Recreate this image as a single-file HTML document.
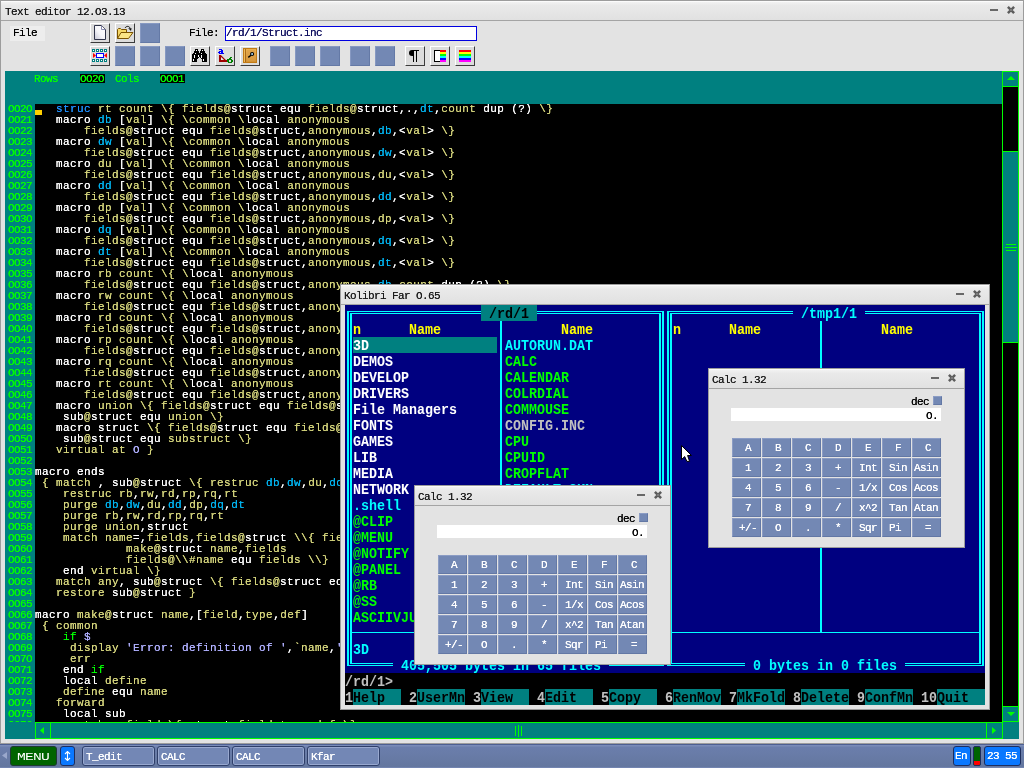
<!DOCTYPE html>
<html><head><meta charset="utf-8"><title>KolibriOS</title>
<style>
html,body{margin:0;padding:0}
body{width:1024px;height:768px;overflow:hidden;position:relative;background:#6679a7;font-family:"Liberation Mono",monospace}
div,span,svg{position:absolute;box-sizing:border-box}
span.i{position:static}
.win{background:#e3e3e3;border:1px solid #9c9c9c}
.tb{left:0;top:0;right:0;height:20px;background:linear-gradient(#f2f2f2,#e9e9e9 20%,#e1e1e1);border-bottom:1px solid #a4a4a4;border-top:1px solid #fbfbfb}
.s{font:11px/11px "Liberation Mono",monospace;letter-spacing:-0.6px;white-space:pre;color:#000;text-shadow:0 0 0 currentColor}
.tt{left:4px;top:6px;color:#1c1c1c}
.mn{width:8px;height:2px;background:#686868;top:8px}
.cl{width:8px;height:8px;top:5px}
.code{font:11px/11px "Liberation Mono",monospace;letter-spacing:0.4px;white-space:pre;text-shadow:0 0 0 currentColor}
.code span{position:static}
.ib{width:20px;height:20px;background:#dcdcdc;border:1px solid;border-color:#fff #3c3c3c #3c3c3c #fff}
.bb{width:20px;height:20px;background:#7388b4;border:1px solid;border-color:#8799c2 #6479a6 #6479a6 #8799c2}
.cb{width:29px;height:19px;background:#7388b4;border:1px solid;border-color:#8b9cc4 #6378a5 #6378a5 #8b9cc4;color:#fff;text-align:center}
.cb .s{top:4px;color:#fff}
.tk{top:2px;height:20px;width:73px;background:#7387b5;border:1px solid #2f3f6a;border-radius:3px;box-shadow:inset 0 0 0 1px #98a8cf}
.tk .s{left:3px;top:5px;color:#fff}
.f{font:bold 13.333px/14px "Liberation Mono",monospace;white-space:pre;height:14px}
.cy{background:#00ffff}
</style></head><body>
<div id="root" style="left:0;top:0;width:1024px;height:768px;will-change:transform">

<div class="win" style="left:0;top:0;width:1024px;height:744px">
<div class="tb"></div><div class="s tt">Text editor 12.O3.13</div>
<div class="mn" style="left:989px"></div>
<svg class="cl" style="left:1006px" viewBox="0 0 8 8"><path d="M0.9 0.9L7.1 7.1M7.1 0.9L0.9 7.1" stroke="#5c5c5c" stroke-width="2.5" stroke-linecap="butt"/><rect x="3" y="3" width="2" height="2" fill="#7c7c7c"/></svg>
<div style="left:9px;top:25px;width:35px;height:15px;background:#ededed"></div><div class="s" style="left:12px;top:27px">File</div>
<div class="ib" style="left:89px;top:22px"><svg style="left:3px;top:1px" width="13" height="16" viewBox="0 0 13 16"><defs><linearGradient id="pg" x1="1" y1="0" x2="0" y2="1"><stop offset="0" stop-color="#fff"/><stop offset="0.55" stop-color="#f6f6fa"/><stop offset="1" stop-color="#c4c4d4"/></linearGradient></defs><path d="M0.5 0.5H7.5L11.5 4.5V14.5H0.5Z" fill="url(#pg)" stroke="#30344a" stroke-width="1"/><path d="M7.5 0.8V4.5H11.2" fill="#fff" stroke="#8a8cb0" stroke-width="1"/></svg></div>
<div class="ib" style="left:114px;top:22px"><svg style="left:0px;top:1px" width="18" height="16" viewBox="0 0 18 16"><path d="M1.5 13.5V4.5L2.5 3.5H4.5L5.5 4.5H10.5V8" fill="#f6d868" stroke="#7a5200" stroke-width="1"/><path d="M1.5 13.5L5 7.5H17L12.5 13.5Z" fill="#fbe486" stroke="#7a5200" stroke-width="1"/><path d="M9 3C10.5 0.8 13 0.8 14.2 3.2" fill="none" stroke="#111" stroke-width="1"/><path d="M12.2 3.2H15.6L15 6Z" fill="#111"/></svg></div>
<div class="bb" style="left:139px;top:22px"></div>
<div class="ib" style="left:89px;top:45px"><svg style="left:0;top:0" width="18" height="18" viewBox="0 0 18 18" shape-rendering="crispEdges"><rect x="1" y="2" width="3" height="3" fill="#008080"/><rect x="2" y="3" width="1" height="1" fill="#fff"/><rect x="5" y="2" width="3" height="3" fill="#008080"/><rect x="6" y="3" width="1" height="1" fill="#fff"/><rect x="9" y="2" width="3" height="3" fill="#008080"/><rect x="10" y="3" width="1" height="1" fill="#fff"/><rect x="13" y="2" width="3" height="3" fill="#008080"/><rect x="14" y="3" width="1" height="1" fill="#fff"/><rect x="1" y="12" width="3" height="3" fill="#008080"/><rect x="2" y="13" width="1" height="1" fill="#fff"/><rect x="5" y="12" width="3" height="3" fill="#008080"/><rect x="6" y="13" width="1" height="1" fill="#fff"/><rect x="9" y="12" width="3" height="3" fill="#008080"/><rect x="10" y="13" width="1" height="1" fill="#fff"/><rect x="13" y="12" width="3" height="3" fill="#008080"/><rect x="14" y="13" width="1" height="1" fill="#fff"/><rect x="5" y="6" width="8" height="5" fill="#0000ff"/><rect x="6" y="7" width="6" height="3" fill="#fff"/><path d="M2 6V11L5 8.5Z" fill="#ff0000" shape-rendering="auto"/><path d="M16 6V11L13 8.5Z" fill="#ff0000" shape-rendering="auto"/></svg></div>
<div class="bb" style="left:114px;top:45px"></div>
<div class="bb" style="left:139px;top:45px"></div>
<div class="bb" style="left:164px;top:45px"></div>
<div class="ib" style="left:189px;top:45px"><svg style="left:1px;top:2px" width="16" height="14" viewBox="0 0 16 14" shape-rendering="crispEdges"><rect x="3" y="0" width="3" height="2" fill="#000"/><rect x="9" y="0" width="3" height="2" fill="#000"/><rect x="2" y="2" width="5" height="2" fill="#000"/><rect x="8" y="2" width="5" height="2" fill="#000"/><rect x="1" y="4" width="13" height="1" fill="#000"/><rect x="0" y="5" width="15" height="3" fill="#000"/><rect x="0" y="8" width="7" height="1" fill="#000"/><rect x="8" y="8" width="7" height="1" fill="#000"/><rect x="0" y="9" width="6" height="1" fill="#000"/><rect x="9" y="9" width="6" height="1" fill="#000"/><rect x="0" y="10" width="5" height="3" fill="#000"/><rect x="10" y="10" width="5" height="3" fill="#000"/><rect x="4" y="1" width="1" height="1" fill="#fff"/><rect x="10" y="1" width="1" height="1" fill="#fff"/><rect x="3" y="4" width="1" height="1" fill="#fff"/><rect x="9" y="4" width="1" height="1" fill="#fff"/><rect x="2" y="6" width="1" height="3" fill="#fff"/><rect x="6" y="6" width="1" height="2" fill="#fff"/><rect x="9" y="6" width="1" height="3" fill="#fff"/><rect x="1" y="10" width="1" height="2" fill="#fff"/><rect x="11" y="10" width="1" height="2" fill="#fff"/></svg></div>
<div class="ib" style="left:214px;top:45px"><svg style="left:0;top:0" width="18" height="18" viewBox="0 0 18 18"><g shape-rendering="crispEdges"><rect x="3" y="2" width="3" height="1" fill="#0000ff"/><rect x="5" y="3" width="2" height="1" fill="#0000ff"/><rect x="3" y="4" width="4" height="1" fill="#0000ff"/><rect x="2" y="5" width="2" height="1" fill="#0000ff"/><rect x="5" y="5" width="2" height="1" fill="#0000ff"/><rect x="3" y="6" width="4" height="1" fill="#0000ff"/><rect x="7" y="6" width="1" height="1" fill="#0000ff"/><rect x="3" y="8" width="2" height="7" fill="#a00000"/><rect x="3" y="13" width="8" height="2" fill="#a00000"/><rect x="5" y="11" width="2" height="2" fill="#e4f0f0"/></g><path d="M4.5 8.5L10.5 14.5" stroke="#a00000" stroke-width="1.1"/><g shape-rendering="crispEdges"><rect x="14" y="10" width="2" height="1" fill="#008000"/><rect x="13" y="11" width="2" height="1" fill="#008000"/><rect x="12" y="12" width="4" height="1" fill="#008000"/><rect x="11" y="13" width="2" height="2" fill="#008000"/><rect x="15" y="13" width="2" height="2" fill="#008000"/><rect x="12" y="15" width="4" height="1" fill="#008000"/><rect x="11" y="12" width="1" height="1" fill="#008000"/></g></svg></div>
<div class="ib" style="left:239px;top:45px"><svg style="left:2px;top:1px" width="14" height="15" viewBox="0 0 14 15"><defs><linearGradient id="bk" x1="0" y1="0" x2="0" y2="1"><stop offset="0" stop-color="#eeb450"/><stop offset="0.5" stop-color="#dda044"/><stop offset="1" stop-color="#d09030"/></linearGradient></defs><rect x="0.5" y="0.5" width="13" height="14" fill="url(#bk)" stroke="#c27a14"/><rect x="1" y="1" width="1.2" height="13" fill="#f0bc5c"/><rect x="2.2" y="1" width="0.8" height="13" fill="#9a5a10"/><rect x="4" y="2" width="8" height="11" fill="#d89c48" opacity="0.6"/><circle cx="9.1" cy="6" r="1.5" fill="#b8e4ff" stroke="#000" stroke-width="1.1"/><path d="M8 7.2L5.3 9.4" stroke="#000" stroke-width="1.4"/></svg></div>
<div class="bb" style="left:269px;top:45px"></div>
<div class="bb" style="left:294px;top:45px"></div>
<div class="bb" style="left:319px;top:45px"></div>
<div class="bb" style="left:349px;top:45px"></div>
<div class="bb" style="left:374px;top:45px"></div>
<div class="ib" style="left:404px;top:45px"><svg style="left:3px;top:3px" width="12" height="13" viewBox="0 0 12 13"><path d="M10 0H3A3 3 0 0 0 3 6H4V12H5V1H7V12H8V1H10Z" fill="#000"/></svg></div>
<div class="ib" style="left:429px;top:45px"><svg style="left:3px;top:3px" width="13" height="12" viewBox="0 0 13 12" shape-rendering="crispEdges"><rect x="0" y="0" width="6" height="12" fill="#000"/><rect x="1" y="1" width="5" height="10" fill="#fff"/><rect x="6" y="0" width="6" height="2" fill="#ff0000"/><rect x="6" y="2" width="6" height="2" fill="#ffff00"/><rect x="6" y="4" width="6" height="2" fill="#00ff00"/><rect x="6" y="6" width="6" height="2" fill="#00ffff"/><rect x="6" y="8" width="6" height="2" fill="#0000ff"/><rect x="6" y="10" width="6" height="2" fill="#ff00ff"/></svg></div>
<div class="ib" style="left:454px;top:45px"><svg style="left:3px;top:3px" width="13" height="12" viewBox="0 0 13 12" shape-rendering="crispEdges"><rect x="0" y="0" width="12" height="2" fill="#ff0000"/><rect x="0" y="2" width="12" height="2" fill="#ffff00"/><rect x="0" y="4" width="12" height="2" fill="#00ff00"/><rect x="0" y="6" width="12" height="2" fill="#00ffff"/><rect x="0" y="8" width="12" height="2" fill="#0000ff"/><rect x="0" y="10" width="12" height="2" fill="#ff00ff"/></svg></div>
<div class="s" style="left:188px;top:27px">File:</div>
<div style="left:224px;top:25px;width:252px;height:15px;background:#fff;border:1px solid #0000e0"></div>
<div class="s" style="left:225px;top:27px;color:#101060">/rd/1/Struct.inc</div>
<div style="left:4px;top:70px;width:1014px;height:668px;background:#008080"></div>
<div style="left:34px;top:103px;width:967px;height:618px;background:#000;overflow:hidden">
<div style="left:0;top:6px;width:7px;height:5px;background:#ffd000"></div>
<div class="code" style="left:0;top:0">
<div style="left:0;top:0px;height:11px"><span style="color:#d4d47c">   </span><span style="color:#1e90ff">struc </span><span style="color:#d4d47c">rt count \{ fields@</span><span style="color:#ffffff">struct equ </span><span style="color:#d4d47c">fields@</span><span style="color:#ffffff">struct,.,</span><span style="color:#00b4f0">dt</span><span style="color:#ffffff">,</span><span style="color:#d4d47c">count </span><span style="color:#ffffff">dup (?) </span><span style="color:#d4d47c">\}</span></div>
<div style="left:0;top:11px;height:11px"><span style="color:#d4d47c">   </span><span style="color:#ffffff">macro </span><span style="color:#00b4f0">db </span><span style="color:#ffffff">[</span><span style="color:#d4d47c">val</span><span style="color:#ffffff">] </span><span style="color:#d4d47c">\{ \common \</span><span style="color:#ffffff">local </span><span style="color:#d4d47c">anonymous</span></div>
<div style="left:0;top:22px;height:11px"><span style="color:#d4d47c">       fields@</span><span style="color:#ffffff">struct equ </span><span style="color:#d4d47c">fields@</span><span style="color:#ffffff">struct,</span><span style="color:#d4d47c">anonymous</span><span style="color:#ffffff">,</span><span style="color:#00b4f0">db</span><span style="color:#ffffff">,&lt;</span><span style="color:#d4d47c">val</span><span style="color:#ffffff">&gt; </span><span style="color:#d4d47c">\}</span></div>
<div style="left:0;top:33px;height:11px"><span style="color:#d4d47c">   </span><span style="color:#ffffff">macro </span><span style="color:#00b4f0">dw </span><span style="color:#ffffff">[</span><span style="color:#d4d47c">val</span><span style="color:#ffffff">] </span><span style="color:#d4d47c">\{ \common \</span><span style="color:#ffffff">local </span><span style="color:#d4d47c">anonymous</span></div>
<div style="left:0;top:44px;height:11px"><span style="color:#d4d47c">       fields@</span><span style="color:#ffffff">struct equ </span><span style="color:#d4d47c">fields@</span><span style="color:#ffffff">struct,</span><span style="color:#d4d47c">anonymous</span><span style="color:#ffffff">,</span><span style="color:#00b4f0">dw</span><span style="color:#ffffff">,&lt;</span><span style="color:#d4d47c">val</span><span style="color:#ffffff">&gt; </span><span style="color:#d4d47c">\}</span></div>
<div style="left:0;top:55px;height:11px"><span style="color:#d4d47c">   </span><span style="color:#ffffff">macro </span><span style="color:#d4d47c">du </span><span style="color:#ffffff">[</span><span style="color:#d4d47c">val</span><span style="color:#ffffff">] </span><span style="color:#d4d47c">\{ \common \</span><span style="color:#ffffff">local </span><span style="color:#d4d47c">anonymous</span></div>
<div style="left:0;top:66px;height:11px"><span style="color:#d4d47c">       fields@</span><span style="color:#ffffff">struct equ </span><span style="color:#d4d47c">fields@</span><span style="color:#ffffff">struct,</span><span style="color:#d4d47c">anonymous</span><span style="color:#ffffff">,</span><span style="color:#d4d47c">du</span><span style="color:#ffffff">,&lt;</span><span style="color:#d4d47c">val</span><span style="color:#ffffff">&gt; </span><span style="color:#d4d47c">\}</span></div>
<div style="left:0;top:77px;height:11px"><span style="color:#d4d47c">   </span><span style="color:#ffffff">macro </span><span style="color:#00b4f0">dd </span><span style="color:#ffffff">[</span><span style="color:#d4d47c">val</span><span style="color:#ffffff">] </span><span style="color:#d4d47c">\{ \common \</span><span style="color:#ffffff">local </span><span style="color:#d4d47c">anonymous</span></div>
<div style="left:0;top:88px;height:11px"><span style="color:#d4d47c">       fields@</span><span style="color:#ffffff">struct equ </span><span style="color:#d4d47c">fields@</span><span style="color:#ffffff">struct,</span><span style="color:#d4d47c">anonymous</span><span style="color:#ffffff">,</span><span style="color:#00b4f0">dd</span><span style="color:#ffffff">,&lt;</span><span style="color:#d4d47c">val</span><span style="color:#ffffff">&gt; </span><span style="color:#d4d47c">\}</span></div>
<div style="left:0;top:99px;height:11px"><span style="color:#d4d47c">   </span><span style="color:#ffffff">macro </span><span style="color:#d4d47c">dp </span><span style="color:#ffffff">[</span><span style="color:#d4d47c">val</span><span style="color:#ffffff">] </span><span style="color:#d4d47c">\{ \common \</span><span style="color:#ffffff">local </span><span style="color:#d4d47c">anonymous</span></div>
<div style="left:0;top:110px;height:11px"><span style="color:#d4d47c">       fields@</span><span style="color:#ffffff">struct equ </span><span style="color:#d4d47c">fields@</span><span style="color:#ffffff">struct,</span><span style="color:#d4d47c">anonymous</span><span style="color:#ffffff">,</span><span style="color:#d4d47c">dp</span><span style="color:#ffffff">,&lt;</span><span style="color:#d4d47c">val</span><span style="color:#ffffff">&gt; </span><span style="color:#d4d47c">\}</span></div>
<div style="left:0;top:121px;height:11px"><span style="color:#d4d47c">   </span><span style="color:#ffffff">macro </span><span style="color:#00b4f0">dq </span><span style="color:#ffffff">[</span><span style="color:#d4d47c">val</span><span style="color:#ffffff">] </span><span style="color:#d4d47c">\{ \common \</span><span style="color:#ffffff">local </span><span style="color:#d4d47c">anonymous</span></div>
<div style="left:0;top:132px;height:11px"><span style="color:#d4d47c">       fields@</span><span style="color:#ffffff">struct equ </span><span style="color:#d4d47c">fields@</span><span style="color:#ffffff">struct,</span><span style="color:#d4d47c">anonymous</span><span style="color:#ffffff">,</span><span style="color:#00b4f0">dq</span><span style="color:#ffffff">,&lt;</span><span style="color:#d4d47c">val</span><span style="color:#ffffff">&gt; </span><span style="color:#d4d47c">\}</span></div>
<div style="left:0;top:143px;height:11px"><span style="color:#d4d47c">   </span><span style="color:#ffffff">macro </span><span style="color:#00b4f0">dt </span><span style="color:#ffffff">[</span><span style="color:#d4d47c">val</span><span style="color:#ffffff">] </span><span style="color:#d4d47c">\{ \common \</span><span style="color:#ffffff">local </span><span style="color:#d4d47c">anonymous</span></div>
<div style="left:0;top:154px;height:11px"><span style="color:#d4d47c">       fields@</span><span style="color:#ffffff">struct equ </span><span style="color:#d4d47c">fields@</span><span style="color:#ffffff">struct,</span><span style="color:#d4d47c">anonymous</span><span style="color:#ffffff">,</span><span style="color:#00b4f0">dt</span><span style="color:#ffffff">,&lt;</span><span style="color:#d4d47c">val</span><span style="color:#ffffff">&gt; </span><span style="color:#d4d47c">\}</span></div>
<div style="left:0;top:165px;height:11px"><span style="color:#d4d47c">   </span><span style="color:#ffffff">macro </span><span style="color:#d4d47c">rb count \{ \</span><span style="color:#ffffff">local </span><span style="color:#d4d47c">anonymous</span></div>
<div style="left:0;top:176px;height:11px"><span style="color:#d4d47c">       fields@</span><span style="color:#ffffff">struct equ </span><span style="color:#d4d47c">fields@</span><span style="color:#ffffff">struct,</span><span style="color:#d4d47c">anonymous</span><span style="color:#ffffff">,</span><span style="color:#00b4f0">db</span><span style="color:#ffffff">,</span><span style="color:#d4d47c">count </span><span style="color:#ffffff">dup (?) </span><span style="color:#d4d47c">\}</span></div>
<div style="left:0;top:187px;height:11px"><span style="color:#d4d47c">   </span><span style="color:#ffffff">macro </span><span style="color:#d4d47c">rw count \{ \</span><span style="color:#ffffff">local </span><span style="color:#d4d47c">anonymous</span></div>
<div style="left:0;top:198px;height:11px"><span style="color:#d4d47c">       fields@</span><span style="color:#ffffff">struct equ </span><span style="color:#d4d47c">fields@</span><span style="color:#ffffff">struct,</span><span style="color:#d4d47c">anonymous</span><span style="color:#ffffff">,</span><span style="color:#00b4f0">dw</span><span style="color:#ffffff">,</span><span style="color:#d4d47c">count </span><span style="color:#ffffff">dup (?) </span><span style="color:#d4d47c">\}</span></div>
<div style="left:0;top:209px;height:11px"><span style="color:#d4d47c">   </span><span style="color:#ffffff">macro </span><span style="color:#d4d47c">rd count \{ \</span><span style="color:#ffffff">local </span><span style="color:#d4d47c">anonymous</span></div>
<div style="left:0;top:220px;height:11px"><span style="color:#d4d47c">       fields@</span><span style="color:#ffffff">struct equ </span><span style="color:#d4d47c">fields@</span><span style="color:#ffffff">struct,</span><span style="color:#d4d47c">anonymous</span><span style="color:#ffffff">,</span><span style="color:#00b4f0">dd</span><span style="color:#ffffff">,</span><span style="color:#d4d47c">count </span><span style="color:#ffffff">dup (?) </span><span style="color:#d4d47c">\}</span></div>
<div style="left:0;top:231px;height:11px"><span style="color:#d4d47c">   </span><span style="color:#ffffff">macro </span><span style="color:#d4d47c">rp count \{ \</span><span style="color:#ffffff">local </span><span style="color:#d4d47c">anonymous</span></div>
<div style="left:0;top:242px;height:11px"><span style="color:#d4d47c">       fields@</span><span style="color:#ffffff">struct equ </span><span style="color:#d4d47c">fields@</span><span style="color:#ffffff">struct,</span><span style="color:#d4d47c">anonymous</span><span style="color:#ffffff">,</span><span style="color:#d4d47c">dp</span><span style="color:#ffffff">,</span><span style="color:#d4d47c">count </span><span style="color:#ffffff">dup (?) </span><span style="color:#d4d47c">\}</span></div>
<div style="left:0;top:253px;height:11px"><span style="color:#d4d47c">   </span><span style="color:#ffffff">macro </span><span style="color:#d4d47c">rq count \{ \</span><span style="color:#ffffff">local </span><span style="color:#d4d47c">anonymous</span></div>
<div style="left:0;top:264px;height:11px"><span style="color:#d4d47c">       fields@</span><span style="color:#ffffff">struct equ </span><span style="color:#d4d47c">fields@</span><span style="color:#ffffff">struct,</span><span style="color:#d4d47c">anonymous</span><span style="color:#ffffff">,</span><span style="color:#00b4f0">dq</span><span style="color:#ffffff">,</span><span style="color:#d4d47c">count </span><span style="color:#ffffff">dup (?) </span><span style="color:#d4d47c">\}</span></div>
<div style="left:0;top:275px;height:11px"><span style="color:#d4d47c">   </span><span style="color:#ffffff">macro </span><span style="color:#d4d47c">rt count \{ \</span><span style="color:#ffffff">local </span><span style="color:#d4d47c">anonymous</span></div>
<div style="left:0;top:286px;height:11px"><span style="color:#d4d47c">       fields@</span><span style="color:#ffffff">struct equ </span><span style="color:#d4d47c">fields@</span><span style="color:#ffffff">struct,</span><span style="color:#d4d47c">anonymous</span><span style="color:#ffffff">,</span><span style="color:#00b4f0">dt</span><span style="color:#ffffff">,</span><span style="color:#d4d47c">count </span><span style="color:#ffffff">dup (?) </span><span style="color:#d4d47c">\}</span></div>
<div style="left:0;top:297px;height:11px"><span style="color:#d4d47c">   </span><span style="color:#ffffff">macro </span><span style="color:#d4d47c">union \{ fields@</span><span style="color:#ffffff">struct equ </span><span style="color:#d4d47c">fields@</span><span style="color:#ffffff">struct,,</span><span style="color:#d4d47c">union</span><span style="color:#ffffff">,&lt;</span></div>
<div style="left:0;top:308px;height:11px"><span style="color:#d4d47c">    </span><span style="color:#ffffff">sub</span><span style="color:#d4d47c">@</span><span style="color:#ffffff">struct equ </span><span style="color:#d4d47c">union \}</span></div>
<div style="left:0;top:319px;height:11px"><span style="color:#d4d47c">   </span><span style="color:#ffffff">macro struct </span><span style="color:#d4d47c">\{ fields@</span><span style="color:#ffffff">struct equ </span><span style="color:#d4d47c">fields@</span><span style="color:#ffffff">struct,,</span><span style="color:#d4d47c">substruct</span><span style="color:#ffffff">,&lt;</span></div>
<div style="left:0;top:330px;height:11px"><span style="color:#d4d47c">    </span><span style="color:#ffffff">sub</span><span style="color:#d4d47c">@</span><span style="color:#ffffff">struct equ </span><span style="color:#d4d47c">substruct \}</span></div>
<div style="left:0;top:341px;height:11px"><span style="color:#d4d47c">   virtual at </span><span style="color:#b0b0ff">O </span><span style="color:#d4d47c">}</span></div>
<div style="left:0;top:352px;height:11px"></div>
<div style="left:0;top:363px;height:11px"><span style="color:#ffffff">macro ends</span></div>
<div style="left:0;top:374px;height:11px"><span style="color:#d4d47c"> { match </span><span style="color:#ffffff">, sub</span><span style="color:#d4d47c">@</span><span style="color:#ffffff">struct </span><span style="color:#d4d47c">\{ restruc </span><span style="color:#00b4f0">db</span><span style="color:#ffffff">,</span><span style="color:#00b4f0">dw</span><span style="color:#ffffff">,</span><span style="color:#d4d47c">du</span><span style="color:#ffffff">,</span><span style="color:#00b4f0">dd</span><span style="color:#ffffff">,</span><span style="color:#d4d47c">dp</span><span style="color:#ffffff">,</span><span style="color:#00b4f0">dq</span><span style="color:#ffffff">,</span><span style="color:#00b4f0">dt</span></div>
<div style="left:0;top:385px;height:11px"><span style="color:#d4d47c">    restruc rb</span><span style="color:#ffffff">,</span><span style="color:#d4d47c">rw</span><span style="color:#ffffff">,</span><span style="color:#d4d47c">rd</span><span style="color:#ffffff">,</span><span style="color:#d4d47c">rp</span><span style="color:#ffffff">,</span><span style="color:#d4d47c">rq</span><span style="color:#ffffff">,</span><span style="color:#d4d47c">rt</span></div>
<div style="left:0;top:396px;height:11px"><span style="color:#d4d47c">    purge </span><span style="color:#00b4f0">db</span><span style="color:#ffffff">,</span><span style="color:#00b4f0">dw</span><span style="color:#ffffff">,</span><span style="color:#d4d47c">du</span><span style="color:#ffffff">,</span><span style="color:#00b4f0">dd</span><span style="color:#ffffff">,</span><span style="color:#d4d47c">dp</span><span style="color:#ffffff">,</span><span style="color:#00b4f0">dq</span><span style="color:#ffffff">,</span><span style="color:#00b4f0">dt</span></div>
<div style="left:0;top:407px;height:11px"><span style="color:#d4d47c">    purge rb</span><span style="color:#ffffff">,</span><span style="color:#d4d47c">rw</span><span style="color:#ffffff">,</span><span style="color:#d4d47c">rd</span><span style="color:#ffffff">,</span><span style="color:#d4d47c">rp</span><span style="color:#ffffff">,</span><span style="color:#d4d47c">rq</span><span style="color:#ffffff">,</span><span style="color:#d4d47c">rt</span></div>
<div style="left:0;top:418px;height:11px"><span style="color:#d4d47c">    purge union</span><span style="color:#ffffff">,struct</span></div>
<div style="left:0;top:429px;height:11px"><span style="color:#d4d47c">    match name</span><span style="color:#ffffff">=,</span><span style="color:#d4d47c">fields</span><span style="color:#ffffff">,</span><span style="color:#d4d47c">fields@</span><span style="color:#ffffff">struct </span><span style="color:#d4d47c">\\{ fields@</span><span style="color:#ffffff">struct equ</span></div>
<div style="left:0;top:440px;height:11px"><span style="color:#d4d47c">             make@</span><span style="color:#ffffff">struct </span><span style="color:#d4d47c">name</span><span style="color:#ffffff">,</span><span style="color:#d4d47c">fields</span></div>
<div style="left:0;top:451px;height:11px"><span style="color:#d4d47c">             fields@\\#name </span><span style="color:#ffffff">equ </span><span style="color:#d4d47c">fields \\}</span></div>
<div style="left:0;top:462px;height:11px"><span style="color:#d4d47c">    </span><span style="color:#ffffff">end </span><span style="color:#d4d47c">virtual \}</span></div>
<div style="left:0;top:473px;height:11px"><span style="color:#d4d47c">   match any</span><span style="color:#ffffff">, sub</span><span style="color:#d4d47c">@</span><span style="color:#ffffff">struct </span><span style="color:#d4d47c">\{ fields@</span><span style="color:#ffffff">struct equ </span><span style="color:#d4d47c">fields@</span><span style="color:#ffffff">struct,.,sub</span><span style="color:#d4d47c">@</span><span style="color:#ffffff">struct,&lt;</span><span style="color:#d4d47c">fields</span><span style="color:#ffffff">&gt; </span><span style="color:#d4d47c">\}</span></div>
<div style="left:0;top:484px;height:11px"><span style="color:#d4d47c">   restore </span><span style="color:#ffffff">sub</span><span style="color:#d4d47c">@</span><span style="color:#ffffff">struct </span><span style="color:#d4d47c">}</span></div>
<div style="left:0;top:495px;height:11px"></div>
<div style="left:0;top:506px;height:11px"><span style="color:#ffffff">macro </span><span style="color:#d4d47c">make@</span><span style="color:#ffffff">struct </span><span style="color:#d4d47c">name</span><span style="color:#ffffff">,[</span><span style="color:#d4d47c">field</span><span style="color:#ffffff">,</span><span style="color:#d4d47c">type</span><span style="color:#ffffff">,</span><span style="color:#d4d47c">def</span><span style="color:#ffffff">]</span></div>
<div style="left:0;top:517px;height:11px"><span style="color:#d4d47c"> { common</span></div>
<div style="left:0;top:528px;height:11px"><span style="color:#d4d47c">    </span><span style="color:#00ff00">if </span><span style="color:#b0b0ff">$</span></div>
<div style="left:0;top:539px;height:11px"><span style="color:#d4d47c">     display </span><span style="color:#b0b0ff">&#x27;Error: definition of &#x27;</span><span style="color:#ffffff">,</span><span style="color:#d4d47c">`name</span><span style="color:#ffffff">,</span><span style="color:#b0b0ff">&#x27; contains illegal instructions.&#x27;</span><span style="color:#ffffff">,</span><span style="color:#b0b0ff">ODh</span><span style="color:#ffffff">,</span><span style="color:#b0b0ff">OAh</span></div>
<div style="left:0;top:550px;height:11px"><span style="color:#d4d47c">     err</span></div>
<div style="left:0;top:561px;height:11px"><span style="color:#d4d47c">    </span><span style="color:#ffffff">end </span><span style="color:#00ff00">if</span></div>
<div style="left:0;top:572px;height:11px"><span style="color:#d4d47c">    </span><span style="color:#ffffff">local </span><span style="color:#d4d47c">define</span></div>
<div style="left:0;top:583px;height:11px"><span style="color:#d4d47c">    define </span><span style="color:#ffffff">equ </span><span style="color:#d4d47c">name</span></div>
<div style="left:0;top:594px;height:11px"><span style="color:#d4d47c">   forward</span></div>
<div style="left:0;top:605px;height:11px"><span style="color:#d4d47c">    </span><span style="color:#ffffff">local sub</span></div>
<div style="left:0;top:616px;height:11px"><span style="color:#d4d47c">     match </span><span style="color:#ffffff">, </span><span style="color:#d4d47c">field \{ </span><span style="color:#ffffff">struct </span><span style="color:#d4d47c">field type def \}</span></div>
</div></div>
<div class="s" style="left:33px;top:73px;color:#00ff00">Rows</div>
<div style="left:79px;top:73px;width:25px;height:9px;background:#000"></div><div class="s" style="left:79px;top:73px;color:#00ff00">OO2O</div>
<div class="s" style="left:114px;top:73px;color:#00ff00">Cols</div>
<div style="left:159px;top:73px;width:25px;height:9px;background:#000"></div><div class="s" style="left:159px;top:73px;color:#00ff00">OOO1</div>
<div style="left:4px;top:103px;width:30px;height:618px;overflow:hidden">
<div class="s" style="left:3px;top:0px;color:#00ff00">OO2O</div>
<div class="s" style="left:3px;top:11px;color:#00ff00">OO21</div>
<div class="s" style="left:3px;top:22px;color:#00ff00">OO22</div>
<div class="s" style="left:3px;top:33px;color:#00ff00">OO23</div>
<div class="s" style="left:3px;top:44px;color:#00ff00">OO24</div>
<div class="s" style="left:3px;top:55px;color:#00ff00">OO25</div>
<div class="s" style="left:3px;top:66px;color:#00ff00">OO26</div>
<div class="s" style="left:3px;top:77px;color:#00ff00">OO27</div>
<div class="s" style="left:3px;top:88px;color:#00ff00">OO28</div>
<div class="s" style="left:3px;top:99px;color:#00ff00">OO29</div>
<div class="s" style="left:3px;top:110px;color:#00ff00">OO3O</div>
<div class="s" style="left:3px;top:121px;color:#00ff00">OO31</div>
<div class="s" style="left:3px;top:132px;color:#00ff00">OO32</div>
<div class="s" style="left:3px;top:143px;color:#00ff00">OO33</div>
<div class="s" style="left:3px;top:154px;color:#00ff00">OO34</div>
<div class="s" style="left:3px;top:165px;color:#00ff00">OO35</div>
<div class="s" style="left:3px;top:176px;color:#00ff00">OO36</div>
<div class="s" style="left:3px;top:187px;color:#00ff00">OO37</div>
<div class="s" style="left:3px;top:198px;color:#00ff00">OO38</div>
<div class="s" style="left:3px;top:209px;color:#00ff00">OO39</div>
<div class="s" style="left:3px;top:220px;color:#00ff00">OO4O</div>
<div class="s" style="left:3px;top:231px;color:#00ff00">OO41</div>
<div class="s" style="left:3px;top:242px;color:#00ff00">OO42</div>
<div class="s" style="left:3px;top:253px;color:#00ff00">OO43</div>
<div class="s" style="left:3px;top:264px;color:#00ff00">OO44</div>
<div class="s" style="left:3px;top:275px;color:#00ff00">OO45</div>
<div class="s" style="left:3px;top:286px;color:#00ff00">OO46</div>
<div class="s" style="left:3px;top:297px;color:#00ff00">OO47</div>
<div class="s" style="left:3px;top:308px;color:#00ff00">OO48</div>
<div class="s" style="left:3px;top:319px;color:#00ff00">OO49</div>
<div class="s" style="left:3px;top:330px;color:#00ff00">OO5O</div>
<div class="s" style="left:3px;top:341px;color:#00ff00">OO51</div>
<div class="s" style="left:3px;top:352px;color:#00ff00">OO52</div>
<div class="s" style="left:3px;top:363px;color:#00ff00">OO53</div>
<div class="s" style="left:3px;top:374px;color:#00ff00">OO54</div>
<div class="s" style="left:3px;top:385px;color:#00ff00">OO55</div>
<div class="s" style="left:3px;top:396px;color:#00ff00">OO56</div>
<div class="s" style="left:3px;top:407px;color:#00ff00">OO57</div>
<div class="s" style="left:3px;top:418px;color:#00ff00">OO58</div>
<div class="s" style="left:3px;top:429px;color:#00ff00">OO59</div>
<div class="s" style="left:3px;top:440px;color:#00ff00">OO6O</div>
<div class="s" style="left:3px;top:451px;color:#00ff00">OO61</div>
<div class="s" style="left:3px;top:462px;color:#00ff00">OO62</div>
<div class="s" style="left:3px;top:473px;color:#00ff00">OO63</div>
<div class="s" style="left:3px;top:484px;color:#00ff00">OO64</div>
<div class="s" style="left:3px;top:495px;color:#00ff00">OO65</div>
<div class="s" style="left:3px;top:506px;color:#00ff00">OO66</div>
<div class="s" style="left:3px;top:517px;color:#00ff00">OO67</div>
<div class="s" style="left:3px;top:528px;color:#00ff00">OO68</div>
<div class="s" style="left:3px;top:539px;color:#00ff00">OO69</div>
<div class="s" style="left:3px;top:550px;color:#00ff00">OO7O</div>
<div class="s" style="left:3px;top:561px;color:#00ff00">OO71</div>
<div class="s" style="left:3px;top:572px;color:#00ff00">OO72</div>
<div class="s" style="left:3px;top:583px;color:#00ff00">OO73</div>
<div class="s" style="left:3px;top:594px;color:#00ff00">OO74</div>
<div class="s" style="left:3px;top:605px;color:#00ff00">OO75</div>
<div class="s" style="left:3px;top:616px;color:#00ff00">OO76</div>
</div>
<div style="left:1001px;top:70px;width:17px;height:651px;background:#000;border:1px solid #00ff00"></div>
<div style="left:1001px;top:70px;width:17px;height:16px;background:#008080;border:1px solid #00ff00"></div>
<svg style="left:1006px;top:75px" width="8" height="4" viewBox="0 0 9 5" preserveAspectRatio="none"><path d="M0 5L4.5 0L9 5Z" fill="#00ff00"/></svg>
<div style="left:1001px;top:150px;width:17px;height:192px;background:#008080;border:1px solid #00ff00"></div>
<div style="left:1005px;top:243px;width:10px;height:1px;background:#00ff00"></div>
<div style="left:1004px;top:246px;width:12px;height:1px;background:#00ff00"></div>
<div style="left:1005px;top:249px;width:10px;height:1px;background:#00ff00"></div>
<div style="left:1001px;top:705px;width:17px;height:16px;background:#008080;border:1px solid #00ff00"></div>
<svg style="left:1006px;top:711px" width="8" height="4" viewBox="0 0 9 5" preserveAspectRatio="none"><path d="M0 0L4.5 5L9 0Z" fill="#00ff00"/></svg>
<div style="left:34px;top:721px;width:968px;height:17px;background:#008080;border:1px solid #00ff00"></div>
<div style="left:34px;top:721px;width:16px;height:17px;border:1px solid #00ff00"></div>
<svg style="left:39px;top:726px" width="4" height="7" viewBox="0 0 5 9" preserveAspectRatio="none"><path d="M5 0L0 4.5L5 9Z" fill="#00ff00"/></svg>
<div style="left:985px;top:721px;width:17px;height:17px;border:1px solid #00ff00"></div>
<svg style="left:991px;top:726px" width="4" height="7" viewBox="0 0 5 9" preserveAspectRatio="none"><path d="M0 0L5 4.5L0 9Z" fill="#00ff00"/></svg>
<div style="left:514px;top:725px;width:1px;height:10px;background:#00ff00"></div>
<div style="left:517px;top:724px;width:1px;height:12px;background:#00ff00"></div>
<div style="left:520px;top:725px;width:1px;height:10px;background:#00ff00"></div>
</div>
<div class="win" style="left:340px;top:284px;width:650px;height:426px">
<div class="tb"></div><div class="s tt" style="left:3px">Kolibri Far O.65</div>
<div class="mn" style="left:615px"></div>
<svg class="cl" style="left:632px" viewBox="0 0 8 8"><path d="M0.9 0.9L7.1 7.1M7.1 0.9L0.9 7.1" stroke="#5c5c5c" stroke-width="2.5" stroke-linecap="butt"/><rect x="3" y="3" width="2" height="2" fill="#7c7c7c"/></svg>
<div style="left:4px;top:20px;width:640px;height:400px;background:#000080;overflow:hidden">
<div style="left:0px;top:368px;width:640px;height:16px;background:#000"></div>
<div style="left:0px;top:384px;width:640px;height:16px;background:#000"></div>
<div style="left:8px;top:384px;width:48px;height:16px;background:#008080"></div>
<div style="left:72px;top:384px;width:48px;height:16px;background:#008080"></div>
<div style="left:136px;top:384px;width:48px;height:16px;background:#008080"></div>
<div style="left:200px;top:384px;width:48px;height:16px;background:#008080"></div>
<div style="left:264px;top:384px;width:48px;height:16px;background:#008080"></div>
<div style="left:328px;top:384px;width:48px;height:16px;background:#008080"></div>
<div style="left:392px;top:384px;width:48px;height:16px;background:#008080"></div>
<div style="left:456px;top:384px;width:48px;height:16px;background:#008080"></div>
<div style="left:520px;top:384px;width:48px;height:16px;background:#008080"></div>
<div style="left:592px;top:384px;width:48px;height:16px;background:#008080"></div>
<div style="left:8px;top:32px;width:144px;height:16px;background:#008080"></div>
<div style="left:136px;top:0px;width:56px;height:16px;background:#008080"></div>
<div style="left:2px;top:6px;width:2px;height:355px;background:#00ffff"></div>
<div style="left:5px;top:8px;width:2px;height:351px;background:#00ffff"></div>
<div style="left:314px;top:8px;width:2px;height:351px;background:#00ffff"></div>
<div style="left:317px;top:6px;width:2px;height:355px;background:#00ffff"></div>
<div style="left:2px;top:6px;width:134px;height:1px;background:#00ffff"></div>
<div style="left:192px;top:6px;width:127px;height:1px;background:#00ffff"></div>
<div style="left:5px;top:8px;width:131px;height:1px;background:#00ffff"></div>
<div style="left:192px;top:8px;width:124px;height:1px;background:#00ffff"></div>
<div style="left:2px;top:360px;width:46px;height:1px;background:#00ffff"></div>
<div style="left:264px;top:360px;width:55px;height:1px;background:#00ffff"></div>
<div style="left:5px;top:358px;width:43px;height:1px;background:#00ffff"></div>
<div style="left:264px;top:358px;width:52px;height:1px;background:#00ffff"></div>
<div style="left:155px;top:16px;width:2px;height:311px;background:#00ffff"></div>
<div style="left:5px;top:327px;width:311px;height:1px;background:#00ffff"></div>
<div style="left:322px;top:6px;width:2px;height:355px;background:#00ffff"></div>
<div style="left:325px;top:8px;width:2px;height:351px;background:#00ffff"></div>
<div style="left:634px;top:8px;width:2px;height:351px;background:#00ffff"></div>
<div style="left:637px;top:6px;width:2px;height:355px;background:#00ffff"></div>
<div style="left:322px;top:6px;width:126px;height:1px;background:#00ffff"></div>
<div style="left:520px;top:6px;width:119px;height:1px;background:#00ffff"></div>
<div style="left:325px;top:8px;width:123px;height:1px;background:#00ffff"></div>
<div style="left:520px;top:8px;width:116px;height:1px;background:#00ffff"></div>
<div style="left:322px;top:360px;width:78px;height:1px;background:#00ffff"></div>
<div style="left:560px;top:360px;width:79px;height:1px;background:#00ffff"></div>
<div style="left:325px;top:358px;width:75px;height:1px;background:#00ffff"></div>
<div style="left:560px;top:358px;width:76px;height:1px;background:#00ffff"></div>
<div style="left:475px;top:16px;width:2px;height:311px;background:#00ffff"></div>
<div style="left:325px;top:327px;width:311px;height:1px;background:#00ffff"></div>
<div style="left:0;top:0;width:640px;height:350px;transform:scaleY(1.142857);transform-origin:0 0">
<div class="f" style="left:144px;top:0.8px;color:#000">/rd/1</div>
<div class="f" style="left:456px;top:0.8px;color:#00ffff">/tmp1/1</div>
<div class="f" style="left:8px;top:14.8px;color:#ffff00">n</div>
<div class="f" style="left:64px;top:14.8px;color:#ffff00">Name</div>
<div class="f" style="left:216px;top:14.8px;color:#ffff00">Name</div>
<div class="f" style="left:328px;top:14.8px;color:#ffff00">n</div>
<div class="f" style="left:384px;top:14.8px;color:#ffff00">Name</div>
<div class="f" style="left:536px;top:14.8px;color:#ffff00">Name</div>
<div class="f" style="left:8px;top:28.8px;color:#ffffff">3D</div>
<div class="f" style="left:8px;top:42.8px;color:#ffffff">DEMOS</div>
<div class="f" style="left:8px;top:56.8px;color:#ffffff">DEVELOP</div>
<div class="f" style="left:8px;top:70.8px;color:#ffffff">DRIVERS</div>
<div class="f" style="left:8px;top:84.8px;color:#ffffff">File Managers</div>
<div class="f" style="left:8px;top:98.8px;color:#ffffff">FONTS</div>
<div class="f" style="left:8px;top:112.8px;color:#ffffff">GAMES</div>
<div class="f" style="left:8px;top:126.8px;color:#ffffff">LIB</div>
<div class="f" style="left:8px;top:140.8px;color:#ffffff">MEDIA</div>
<div class="f" style="left:8px;top:154.8px;color:#ffffff">NETWORK</div>
<div class="f" style="left:8px;top:168.8px;color:#00ffff">.shell</div>
<div class="f" style="left:8px;top:182.8px;color:#00ff00">@CLIP</div>
<div class="f" style="left:8px;top:196.8px;color:#00ff00">@MENU</div>
<div class="f" style="left:8px;top:210.8px;color:#00ff00">@NOTIFY</div>
<div class="f" style="left:8px;top:224.8px;color:#00ff00">@PANEL</div>
<div class="f" style="left:8px;top:238.8px;color:#00ff00">@RB</div>
<div class="f" style="left:8px;top:252.8px;color:#00ff00">@SS</div>
<div class="f" style="left:8px;top:266.8px;color:#00ff00">ASCIIVJU</div>
<div class="f" style="left:160px;top:28.8px;color:#00ffff">AUTORUN.DAT</div>
<div class="f" style="left:160px;top:42.8px;color:#00ff00">CALC</div>
<div class="f" style="left:160px;top:56.8px;color:#00ff00">CALENDAR</div>
<div class="f" style="left:160px;top:70.8px;color:#00ff00">COLRDIAL</div>
<div class="f" style="left:160px;top:84.8px;color:#00ff00">COMMOUSE</div>
<div class="f" style="left:160px;top:98.8px;color:#c0c0c0">CONFIG.INC</div>
<div class="f" style="left:160px;top:112.8px;color:#00ff00">CPU</div>
<div class="f" style="left:160px;top:126.8px;color:#00ff00">CPUID</div>
<div class="f" style="left:160px;top:140.8px;color:#00ff00">CROPFLAT</div>
<div class="f" style="left:160px;top:154.8px;color:#00ffff">DEFAULT.SKN</div>
<div class="f" style="left:160px;top:168.8px;color:#00ff00">DISPTEST</div>
<div class="f" style="left:160px;top:182.8px;color:#00ff00">DOCPACK</div>
<div class="f" style="left:160px;top:196.8px;color:#00ff00">END</div>
<div class="f" style="left:160px;top:210.8px;color:#00ff00">EOLITE</div>
<div class="f" style="left:160px;top:224.8px;color:#c0c0c0">EOLITE.INI</div>
<div class="f" style="left:160px;top:238.8px;color:#00ff00">HDD_INFO</div>
<div class="f" style="left:160px;top:252.8px;color:#00ff00">ICON</div>
<div class="f" style="left:160px;top:266.8px;color:#c0c0c0">INDEX.HTM</div>
<div class="f" style="left:8px;top:294.8px;color:#00ffff">3D</div>
<div class="f" style="left:56px;top:308.8px;color:#00ffff">405,505 bytes in 65 files</div>
<div class="f" style="left:408px;top:308.8px;color:#00ffff">0 bytes in 0 files</div>
<div class="f" style="left:0px;top:322.8px;color:#c0c0c0">/rd/1&gt;</div>
<div class="f" style="left:0px;top:336.8px;color:#c0c0c0">1</div>
<div class="f" style="left:8px;top:336.8px;color:#000">Help</div>
<div class="f" style="left:64px;top:336.8px;color:#c0c0c0">2</div>
<div class="f" style="left:72px;top:336.8px;color:#000">UserMn</div>
<div class="f" style="left:128px;top:336.8px;color:#c0c0c0">3</div>
<div class="f" style="left:136px;top:336.8px;color:#000">View</div>
<div class="f" style="left:192px;top:336.8px;color:#c0c0c0">4</div>
<div class="f" style="left:200px;top:336.8px;color:#000">Edit</div>
<div class="f" style="left:256px;top:336.8px;color:#c0c0c0">5</div>
<div class="f" style="left:264px;top:336.8px;color:#000">Copy</div>
<div class="f" style="left:320px;top:336.8px;color:#c0c0c0">6</div>
<div class="f" style="left:328px;top:336.8px;color:#000">RenMov</div>
<div class="f" style="left:384px;top:336.8px;color:#c0c0c0">7</div>
<div class="f" style="left:392px;top:336.8px;color:#000">MkFold</div>
<div class="f" style="left:448px;top:336.8px;color:#c0c0c0">8</div>
<div class="f" style="left:456px;top:336.8px;color:#000">Delete</div>
<div class="f" style="left:512px;top:336.8px;color:#c0c0c0">9</div>
<div class="f" style="left:520px;top:336.8px;color:#000">ConfMn</div>
<div class="f" style="left:576px;top:336.8px;color:#c0c0c0">10</div>
<div class="f" style="left:592px;top:336.8px;color:#000">Quit</div>
</div>
</div></div>
<div class="win" style="left:414px;top:485px;width:257px;height:180px">
<div class="tb"></div><div class="s tt" style="left:3px">Calc 1.32</div>
<div class="mn" style="left:222px"></div>
<svg class="cl" style="left:239px" viewBox="0 0 8 8"><path d="M0.9 0.9L7.1 7.1M7.1 0.9L0.9 7.1" stroke="#5c5c5c" stroke-width="2.5" stroke-linecap="butt"/><rect x="3" y="3" width="2" height="2" fill="#7c7c7c"/></svg>
<div class="s" style="left:202px;top:28px">dec</div>
<div style="left:224px;top:27px;width:9px;height:9px;background:#7388b4;border:1px solid;border-color:#8b9cc4 #6378a5 #6378a5 #8b9cc4"></div>
<div style="left:22px;top:39px;width:210px;height:13px;background:#fff"></div>
<div class="s" style="left:217px;top:42px">O.</div>
<div class="cb" style="left:23px;top:69px"><div class="s" style="left:12px">A</div></div>
<div class="cb" style="left:53px;top:69px"><div class="s" style="left:12px">B</div></div>
<div class="cb" style="left:83px;top:69px"><div class="s" style="left:12px">C</div></div>
<div class="cb" style="left:113px;top:69px"><div class="s" style="left:12px">D</div></div>
<div class="cb" style="left:143px;top:69px"><div class="s" style="left:12px">E</div></div>
<div class="cb" style="left:173px;top:69px"><div class="s" style="left:12px">F</div></div>
<div class="cb" style="left:203px;top:69px"><div class="s" style="left:12px">C</div></div>
<div class="cb" style="left:23px;top:89px"><div class="s" style="left:12px">1</div></div>
<div class="cb" style="left:53px;top:89px"><div class="s" style="left:12px">2</div></div>
<div class="cb" style="left:83px;top:89px"><div class="s" style="left:12px">3</div></div>
<div class="cb" style="left:113px;top:89px"><div class="s" style="left:12px">+</div></div>
<div class="cb" style="left:143px;top:89px"><div class="s" style="left:6px">Int</div></div>
<div class="cb" style="left:173px;top:89px"><div class="s" style="left:6px">Sin</div></div>
<div class="cb" style="left:203px;top:89px"><div class="s" style="left:1px">Asin</div></div>
<div class="cb" style="left:23px;top:109px"><div class="s" style="left:12px">4</div></div>
<div class="cb" style="left:53px;top:109px"><div class="s" style="left:12px">5</div></div>
<div class="cb" style="left:83px;top:109px"><div class="s" style="left:12px">6</div></div>
<div class="cb" style="left:113px;top:109px"><div class="s" style="left:12px">-</div></div>
<div class="cb" style="left:143px;top:109px"><div class="s" style="left:6px">1/x</div></div>
<div class="cb" style="left:173px;top:109px"><div class="s" style="left:6px">Cos</div></div>
<div class="cb" style="left:203px;top:109px"><div class="s" style="left:1px">Acos</div></div>
<div class="cb" style="left:23px;top:129px"><div class="s" style="left:12px">7</div></div>
<div class="cb" style="left:53px;top:129px"><div class="s" style="left:12px">8</div></div>
<div class="cb" style="left:83px;top:129px"><div class="s" style="left:12px">9</div></div>
<div class="cb" style="left:113px;top:129px"><div class="s" style="left:12px">/</div></div>
<div class="cb" style="left:143px;top:129px"><div class="s" style="left:6px">x^2</div></div>
<div class="cb" style="left:173px;top:129px"><div class="s" style="left:6px">Tan</div></div>
<div class="cb" style="left:203px;top:129px"><div class="s" style="left:1px">Atan</div></div>
<div class="cb" style="left:23px;top:149px"><div class="s" style="left:6px">+/-</div></div>
<div class="cb" style="left:53px;top:149px"><div class="s" style="left:12px">O</div></div>
<div class="cb" style="left:83px;top:149px"><div class="s" style="left:12px">.</div></div>
<div class="cb" style="left:113px;top:149px"><div class="s" style="left:12px">*</div></div>
<div class="cb" style="left:143px;top:149px"><div class="s" style="left:6px">Sqr</div></div>
<div class="cb" style="left:173px;top:149px"><div class="s" style="left:6px">Pi</div></div>
<div class="cb" style="left:203px;top:149px"><div class="s" style="left:12px">=</div></div>
</div>
<div class="win" style="left:708px;top:368px;width:257px;height:180px">
<div class="tb"></div><div class="s tt" style="left:3px">Calc 1.32</div>
<div class="mn" style="left:222px"></div>
<svg class="cl" style="left:239px" viewBox="0 0 8 8"><path d="M0.9 0.9L7.1 7.1M7.1 0.9L0.9 7.1" stroke="#5c5c5c" stroke-width="2.5" stroke-linecap="butt"/><rect x="3" y="3" width="2" height="2" fill="#7c7c7c"/></svg>
<div class="s" style="left:202px;top:28px">dec</div>
<div style="left:224px;top:27px;width:9px;height:9px;background:#7388b4;border:1px solid;border-color:#8b9cc4 #6378a5 #6378a5 #8b9cc4"></div>
<div style="left:22px;top:39px;width:210px;height:13px;background:#fff"></div>
<div class="s" style="left:217px;top:42px">O.</div>
<div class="cb" style="left:23px;top:69px"><div class="s" style="left:12px">A</div></div>
<div class="cb" style="left:53px;top:69px"><div class="s" style="left:12px">B</div></div>
<div class="cb" style="left:83px;top:69px"><div class="s" style="left:12px">C</div></div>
<div class="cb" style="left:113px;top:69px"><div class="s" style="left:12px">D</div></div>
<div class="cb" style="left:143px;top:69px"><div class="s" style="left:12px">E</div></div>
<div class="cb" style="left:173px;top:69px"><div class="s" style="left:12px">F</div></div>
<div class="cb" style="left:203px;top:69px"><div class="s" style="left:12px">C</div></div>
<div class="cb" style="left:23px;top:89px"><div class="s" style="left:12px">1</div></div>
<div class="cb" style="left:53px;top:89px"><div class="s" style="left:12px">2</div></div>
<div class="cb" style="left:83px;top:89px"><div class="s" style="left:12px">3</div></div>
<div class="cb" style="left:113px;top:89px"><div class="s" style="left:12px">+</div></div>
<div class="cb" style="left:143px;top:89px"><div class="s" style="left:6px">Int</div></div>
<div class="cb" style="left:173px;top:89px"><div class="s" style="left:6px">Sin</div></div>
<div class="cb" style="left:203px;top:89px"><div class="s" style="left:1px">Asin</div></div>
<div class="cb" style="left:23px;top:109px"><div class="s" style="left:12px">4</div></div>
<div class="cb" style="left:53px;top:109px"><div class="s" style="left:12px">5</div></div>
<div class="cb" style="left:83px;top:109px"><div class="s" style="left:12px">6</div></div>
<div class="cb" style="left:113px;top:109px"><div class="s" style="left:12px">-</div></div>
<div class="cb" style="left:143px;top:109px"><div class="s" style="left:6px">1/x</div></div>
<div class="cb" style="left:173px;top:109px"><div class="s" style="left:6px">Cos</div></div>
<div class="cb" style="left:203px;top:109px"><div class="s" style="left:1px">Acos</div></div>
<div class="cb" style="left:23px;top:129px"><div class="s" style="left:12px">7</div></div>
<div class="cb" style="left:53px;top:129px"><div class="s" style="left:12px">8</div></div>
<div class="cb" style="left:83px;top:129px"><div class="s" style="left:12px">9</div></div>
<div class="cb" style="left:113px;top:129px"><div class="s" style="left:12px">/</div></div>
<div class="cb" style="left:143px;top:129px"><div class="s" style="left:6px">x^2</div></div>
<div class="cb" style="left:173px;top:129px"><div class="s" style="left:6px">Tan</div></div>
<div class="cb" style="left:203px;top:129px"><div class="s" style="left:1px">Atan</div></div>
<div class="cb" style="left:23px;top:149px"><div class="s" style="left:6px">+/-</div></div>
<div class="cb" style="left:53px;top:149px"><div class="s" style="left:12px">O</div></div>
<div class="cb" style="left:83px;top:149px"><div class="s" style="left:12px">.</div></div>
<div class="cb" style="left:113px;top:149px"><div class="s" style="left:12px">*</div></div>
<div class="cb" style="left:143px;top:149px"><div class="s" style="left:6px">Sqr</div></div>
<div class="cb" style="left:173px;top:149px"><div class="s" style="left:6px">Pi</div></div>
<div class="cb" style="left:203px;top:149px"><div class="s" style="left:12px">=</div></div>
</div>
<div style="left:0;top:744px;width:1024px;height:24px;background:linear-gradient(#4e6092 0,#4e6092 1px,#7a8cb8 1px,#7a8cb8 2px,#6b7eac 3px,#64779f 23px,#7284b0 23px)">
<svg style="left:2px;top:8px" width="5" height="7" viewBox="0 0 5 7"><path d="M5 0L0 3.5L5 7Z" fill="#9aa8cc"/></svg>
<div style="left:10px;top:2px;width:47px;height:20px;background:#006400;border:1px solid #1e3a34;border-radius:3px"></div>
<div class="s" style="left:17px;top:8px;color:#fff;text-shadow:none;transform:scaleX(1.3333);transform-origin:0 0">MENU</div>
<div style="left:60px;top:2px;width:15px;height:20px;background:#0a78ff;border:1px solid #1e2e5e;border-radius:3px"></div>
<svg style="left:64px;top:7px" width="7" height="10" viewBox="0 0 7 10"><path d="M3.5 0.5V9.5M1 3L3.5 0.5L6 3M1 7L3.5 9.5L6 7" fill="none" stroke="#fff" stroke-width="1.1"/></svg>
<div class="tk" style="left:82px"><div class="s">T_edit</div></div>
<div class="tk" style="left:157px"><div class="s">CALC</div></div>
<div class="tk" style="left:232px"><div class="s">CALC</div></div>
<div class="tk" style="left:307px"><div class="s">Kfar</div></div>
<div style="left:953px;top:2px;width:18px;height:20px;background:#0a78ff;border:1px solid #1e2e5e;border-radius:3px"></div>
<div class="s" style="left:955px;top:7px;color:#fff">En</div>
<div style="left:973px;top:2px;width:8px;height:20px;background:#006400;border:1px solid #1e2e5e;border-radius:2px;overflow:hidden"><div style="left:0;bottom:0;width:8px;height:4px;background:#ff0000"></div></div>
<div style="left:984px;top:2px;width:37px;height:20px;background:#0a78ff;border:1px solid #1e2e5e;border-radius:3px"></div>
<div class="s" style="left:987px;top:7px;color:#fff">23 55</div>
</div>
<svg style="left:680px;top:444px" width="13" height="20" viewBox="0 0 13 20"><path d="M1.5 1.5V15.5L4.7 12.6L6.9 17.4H9.6L7.6 11.5H11.5Z" fill="#fff" stroke="#000" stroke-width="1" stroke-linejoin="miter"/></svg>
</div></body></html>
